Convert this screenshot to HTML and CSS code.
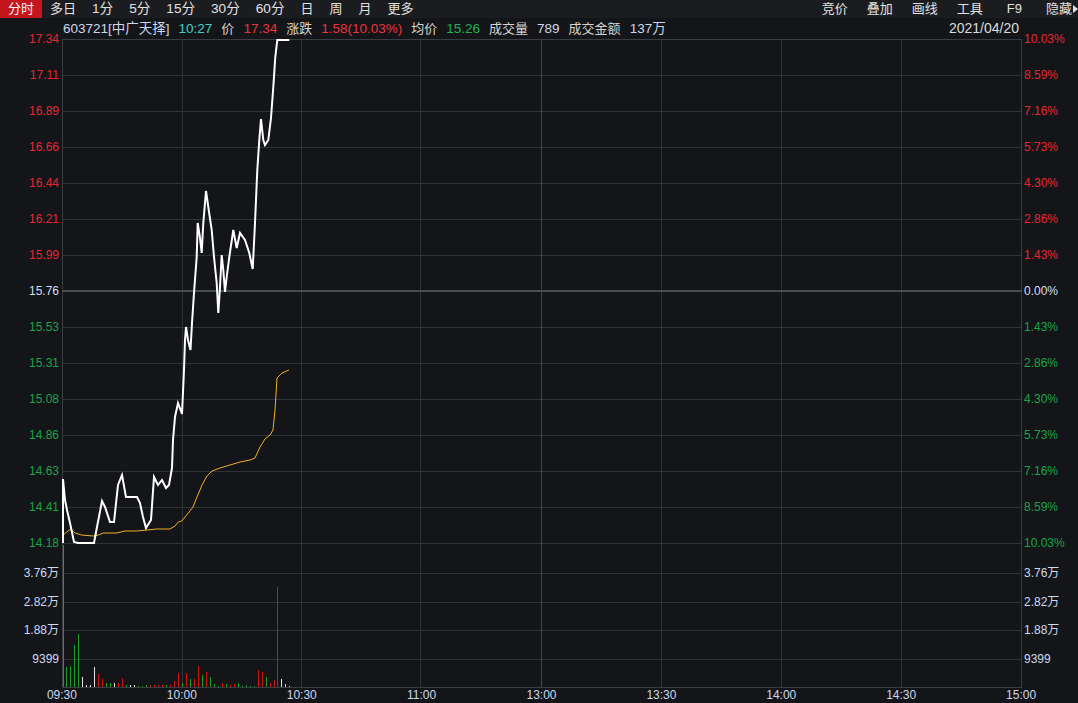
FILE: index.html
```html
<!DOCTYPE html>
<html lang="zh-CN">
<head>
<meta charset="utf-8">
<title>603721 分时</title>
<link rel="stylesheet" href="styles.css">
</head>
<body>
<div class="topbar">
  <div class="tabs">
    <span class="tab active">分时</span>
    <span class="tab">多日</span>
    <span class="tab num">1分</span>
    <span class="tab num">5分</span>
    <span class="tab num">15分</span>
    <span class="tab num">30分</span>
    <span class="tab num">60分</span>
    <span class="tab">日</span>
    <span class="tab">周</span>
    <span class="tab">月</span>
    <span class="tab">更多</span>
  </div>
  <div class="tools">
    <span class="tool">竞价</span>
    <span class="tool">叠加</span>
    <span class="tool">画线</span>
    <span class="tool">工具</span>
    <span class="tool f9">F9</span>
    <span class="tool hide">隐藏</span>
    <span class="tri"></span>
  </div>
</div>
<div class="main">
  <div class="axis axis-left">
    <div class="price-labels">
      <span class="up">17.34</span><span class="up">17.11</span><span class="up">16.89</span><span class="up">16.66</span><span class="up">16.44</span><span class="up">16.21</span><span class="up">15.99</span>
      <span class="flat">15.76</span>
      <span class="down">15.53</span><span class="down">15.31</span><span class="down">15.08</span><span class="down">14.86</span><span class="down">14.63</span><span class="down">14.41</span><span class="down">14.18</span>
    </div>
    <div class="vol-labels">
      <span>3.76万</span><span>2.82万</span><span>1.88万</span><span>9399</span>
    </div>
  </div>
  <div class="info">
    <div class="quote">
      <span class="lt">603721[中广天择]</span>
      <span class="cy">10:27</span>
      <span class="wt">价</span>
      <span class="rd">17.34</span>
      <span class="wt">涨跌</span>
      <span class="rd">1.58(10.03%)</span>
      <span class="wt">均价</span>
      <span class="gr">15.26</span>
      <span class="wt">成交量</span>
      <span class="lt">789</span>
      <span class="wt">成交金额</span>
      <span class="lt">137万</span>
    </div>
    <div class="date">2021/04/20</div>
  </div>
  <svg class="plot" width="960" height="649" viewBox="0 0 960 649">
    <path class="grid" d="M0,36.5H960M0,72.5H960M0,108.5H960M0,144.5H960M0,180.5H960M0,216.5H960M0,288.5H960M0,324.5H960M0,360.5H960M0,396.5H960M0,432.5H960M0,468.5H960M0,504.5H960M0,534.5H960M0,563.5H960M0,591.5H960M0,620.5H960"/>
    <path class="grid" d="M120.5,0V649M239.5,0V649M358.5,0V649M599.5,0V649M719.5,0V649M839.5,0V649"/>
    <path class="grid-strong" d="M479.5,0V648"/>
    <path class="border" d="M0,0.5H960M0.5,0V649M959.5,0V649M0,648.5H960"/>
    <path class="mid" d="M0,252H960"/>
    <path class="bar-g" d="M1.5,506V648M4.5,628V648M8.5,627V648M12.5,606V648M16.5,595V648M44.5,644V648M48.5,644V648M64.5,646V648M76.5,647V648M80.5,647V648M84.5,646V648M104.5,646V648M120.5,644V648M128.5,640V648M140.5,636V648M148.5,638V648M152.5,645V648M156.5,647V648M164.5,645V648M176.5,644V648M180.5,647V648M184.5,646V648M188.5,647V648M192.5,647V648M204.5,638V648"/>
    <path class="bar-r" d="M36.5,635V648M40.5,640V648M56.5,644V648M60.5,639V648M88.5,646V648M92.5,646V648M96.5,646V648M100.5,646V648M108.5,646V648M112.5,642V648M116.5,634V648M124.5,634V648M132.5,640V648M136.5,627V648M144.5,633V648M160.5,644V648M168.5,646V648M172.5,645V648M196.5,631V648M200.5,633V648M208.5,644V648M212.5,641V648M215.5,548V648"/>
    <path class="bar-w" d="M20.5,638V648M24.5,646V648M28.5,646V648M32.5,628V648M52.5,644V648M68.5,646V648M72.5,646V648M219.5,640V648M223.5,645V648M227.5,647V648"/>
    <polyline class="avg" points="1.3,496 4.7,493 8.7,490 13,494 19.7,496 31.3,497 36.3,496 41.3,494 54.7,494 63,492 74.7,492 94.7,490 108,490 113,487 116.3,483 119.7,482 126.3,474 131,468 135,458 140,446 145,437 150,432 158,429 168,426 178,423 188,421 193,419 198,408 203,400 208,396 211,391 213,371 215,339 220,334 227,331"/>
    <polyline class="price" points="1,504 1,440 3,461 5,471 8,484 12,503 16,504 32,504 35,488 40,462 43,468 48,483 52,483 56,446 60,436 64,458 75,458 78,464 81,478 84,489 89,481 92,438 96,446 100,441 104,449 107,446 110,429 111,401 113,378 116,364 120,375 122,331 123,301 124,288 126,301 128.5,311 130,284 132,254 134.7,218 135.7,184 138,199 139.7,214 141.3,184 144,152 146.3,168 149.7,191 152,218 154.7,244 156.3,274 158,248 159.7,216 161.3,231 163,253 164.7,238 167.3,218 171.3,191 174.7,209 178,194 183,201 187.3,214 190.7,230 193,184 195.3,131 197.3,101 199,80 201.3,101 203,106 206.3,101 209,79 211.3,48 213.3,18 215.3,1 227.3,1"/>
  </svg>
  <div class="axis axis-right">
    <div class="price-labels">
      <span class="up">10.03%</span><span class="up">8.59%</span><span class="up">7.16%</span><span class="up">5.73%</span><span class="up">4.30%</span><span class="up">2.86%</span><span class="up">1.43%</span>
      <span class="flat">0.00%</span>
      <span class="down">1.43%</span><span class="down">2.86%</span><span class="down">4.30%</span><span class="down">5.73%</span><span class="down">7.16%</span><span class="down">8.59%</span><span class="down">10.03%</span>
    </div>
    <div class="vol-labels">
      <span>3.76万</span><span>2.82万</span><span>1.88万</span><span>9399</span>
    </div>
  </div>
  <div class="time-axis">
    <span>09:30</span><span>10:00</span><span>10:30</span><span>11:00</span><span>13:00</span><span>13:30</span><span>14:00</span><span>14:30</span><span>15:00</span>
  </div>
</div>
</body>
</html>
```
FILE: styles.css
```css
html, body {
  margin: 0;
  padding: 0;
}
body {
  width: 1078px;
  height: 703px;
  overflow: hidden;
  background: #131519;
  color: #d4d4d4;
  font-family: "Liberation Sans", "Noto Sans CJK SC", sans-serif;
}
.topbar {
  height: 18px;
  background: #1a1c20;
  display: flex;
  justify-content: space-between;
  font-size: 13px;
  line-height: 18px;
  color: #e2e2e2;
}
.tabs {
  display: flex;
}
.tab {
  padding: 0 8px;
  white-space: nowrap;
}
.tab.num {
  font-size: 13.6px;
}
.tab.active {
  background: #c5161d;
  color: #f4f4f4;
}
.tools {
  display: flex;
  align-items: center;
  gap: 19px;
}
.tool {
  white-space: nowrap;
}
.tool.f9 {
  padding: 0 5px;
}
.tool.hide {
  margin-right: -18px;
}
.tri {
  width: 0;
  height: 0;
  border-left: 5px solid #e2e2e2;
  border-top: 4px solid transparent;
  border-bottom: 4px solid transparent;
}
.main {
  display: grid;
  grid-template-columns: 62px 960px 56px;
  grid-template-rows: 21px 649px 15px;
}
.axis {
  grid-row: 1 / 3;
  padding-top: 14px;
  font-size: 12px;
  line-height: 14px;
}
.axis-left {
  grid-column: 1;
  text-align: right;
  padding-right: 3px;
}
.axis-right {
  grid-column: 3;
  text-align: left;
  padding-left: 2px;
}
.price-labels {
  height: 518px;
  display: flex;
  flex-direction: column;
  justify-content: space-between;
}
.vol-labels {
  margin-top: 16px;
  height: 100px;
  display: flex;
  flex-direction: column;
  justify-content: space-between;
  color: #cfdaf0;
}
.price-labels span,
.vol-labels span {
  display: block;
  height: 14px;
  white-space: nowrap;
}
.up { color: #e8262f; }
.down { color: #1aa447; }
.flat { color: #d6def0; }
.info {
  grid-column: 2;
  grid-row: 1;
  display: flex;
  justify-content: space-between;
  align-items: center;
  padding: 0 3px 0 1px;
  font-size: 13.5px;
  line-height: 21px;
  white-space: nowrap;
}
.quote {
  display: flex;
  gap: 9px;
}
.lt { color: #cdd8ee; }
.cy { color: #3fd2c9; }
.wt { color: #d9d6cf; font-size: 13px; }
.rd { color: #f0323b; }
.gr { color: #21b451; }
.date {
  color: #dcdcdc;
  font-size: 14px;
}
.plot {
  grid-column: 2;
  grid-row: 2;
  display: block;
}
.grid {
  stroke: #2f3237;
  stroke-width: 1;
  fill: none;
}
.grid-strong {
  stroke: #43464b;
  stroke-width: 1;
  fill: none;
}
.border {
  stroke: #3a3d42;
  stroke-width: 1;
  fill: none;
}
.mid {
  stroke: #4a4c50;
  stroke-width: 2;
  fill: none;
}
.bar-g { stroke: #1c9d2c; stroke-width: 1; fill: none; }
.bar-r { stroke: #cc1414; stroke-width: 1; fill: none; }
.bar-w { stroke: #e4e4e4; stroke-width: 1; fill: none; }
.avg {
  fill: none;
  stroke: #f2b021;
  stroke-width: 1;
}
.price {
  fill: none;
  stroke: #ffffff;
  stroke-width: 2;
  stroke-linejoin: miter;
}
.time-axis {
  grid-column: 1 / 4;
  grid-row: 3;
  display: flex;
  padding-left: 2px;
  font-size: 12px;
  line-height: 15px;
  color: #cdd8ee;
  overflow: hidden;
}
.time-axis span {
  flex: 0 0 119.9px;
  text-align: center;
}
```
